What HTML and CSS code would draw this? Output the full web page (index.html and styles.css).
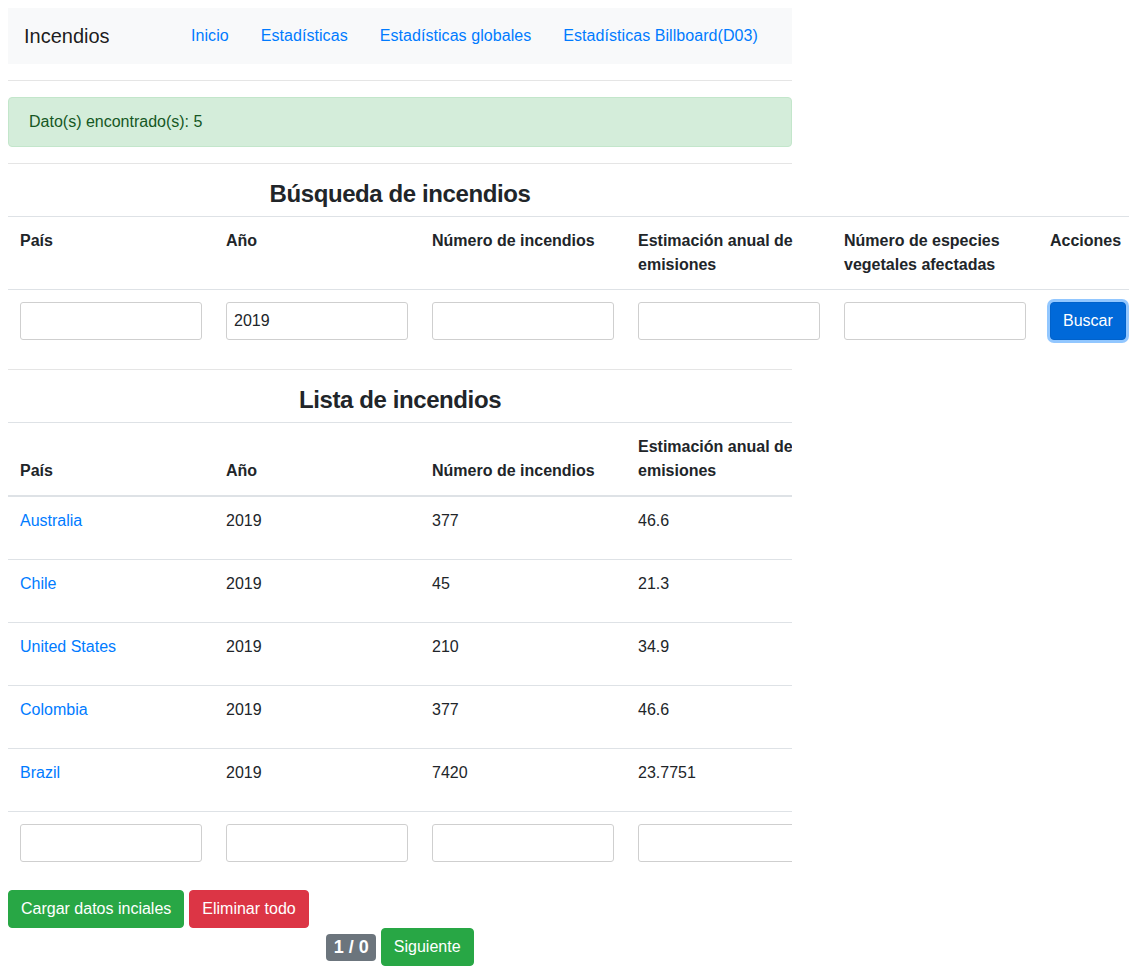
FILE: index.html
```html
<!DOCTYPE html>
<html lang="es">
<head>
<meta charset="utf-8">
<title>Incendios</title>
<link rel="stylesheet" href="styles.css">
</head>
<body>
<div class="main">
  <nav class="navbar">
    <a class="brand" href="#">Incendios</a>
    <ul class="nav-links">
      <li><a href="#">Inicio</a></li>
      <li><a href="#">Estadísticas</a></li>
      <li><a href="#">Estadísticas globales</a></li>
      <li><a href="#">Estadísticas Billboard(D03)</a></li>
    </ul>
  </nav>
  <hr class="sep">
  <div class="alert">Dato(s) encontrado(s): 5</div>
  <hr class="sep">
  <h4 class="title">Búsqueda de incendios</h4>
  <table class="tbl search">
    <colgroup><col><col><col><col><col><col></colgroup>
    <tbody>
      <tr class="head-row">
        <th>País</th>
        <th>Año</th>
        <th>Número de incendios</th>
        <th>Estimación anual de emisiones</th>
        <th>Número de especies vegetales afectadas</th>
        <th>Acciones</th>
      </tr>
      <tr>
        <td><input class="field" type="text"></td>
        <td><input class="field" type="text" value="2019"></td>
        <td><input class="field" type="text"></td>
        <td><input class="field" type="text"></td>
        <td><input class="field" type="text"></td>
        <td><button class="btn btn-primary focus">Buscar</button></td>
      </tr>
    </tbody>
  </table>
  <hr class="sep">
  <h4 class="title">Lista de incendios</h4>
  <div class="clip">
    <table class="tbl list">
      <colgroup><col><col><col><col></colgroup>
      <thead>
        <tr>
          <th>País</th>
          <th>Año</th>
          <th>Número de incendios</th>
          <th>Estimación anual de emisiones</th>
        </tr>
      </thead>
      <tbody>
        <tr><td><a href="#">Australia</a></td><td>2019</td><td>377</td><td>46.6</td></tr>
        <tr><td><a href="#">Chile</a></td><td>2019</td><td>45</td><td>21.3</td></tr>
        <tr><td><a href="#">United States</a></td><td>2019</td><td>210</td><td>34.9</td></tr>
        <tr><td><a href="#">Colombia</a></td><td>2019</td><td>377</td><td>46.6</td></tr>
        <tr><td><a href="#">Brazil</a></td><td>2019</td><td>7420</td><td>23.7751</td></tr>
        <tr>
          <td><input class="field" type="text"></td>
          <td><input class="field" type="text"></td>
          <td><input class="field" type="text"></td>
          <td><input class="field" type="text"></td>
        </tr>
      </tbody>
    </table>
  </div>
  <div class="actions">
    <button class="btn btn-success">Cargar datos inciales</button>
    <button class="btn btn-danger">Eliminar todo</button>
  </div>
  <div class="pager">
    <span class="badge">1 / 0</span>
    <button class="btn btn-success">Siguiente</button>
  </div>
</div>
</body>
</html>
```

FILE: styles.css
```css
html {
  overflow: hidden;
}
body {
  margin: 8px;
  font-family: "Liberation Sans", Arial, sans-serif;
  font-size: 16px;
  line-height: 1.5;
  color: #212529;
  background: #fff;
}
a {
  color: #007bff;
  text-decoration: none;
}
.main {
  width: 784px;
}
.navbar {
  display: flex;
  align-items: center;
  background: #f8f9fa;
  padding: 8px 16px;
}
.brand {
  display: block;
  flex-shrink: 0;
  width: 151px;
  font-size: 20px;
  line-height: 30px;
  padding: 5px 0;
  color: rgba(0, 0, 0, 0.9);
}
.nav-links {
  display: flex;
  flex-shrink: 0;
  list-style: none;
  margin: 0;
  padding: 0;
  white-space: nowrap;
}
.nav-links li {
  flex-shrink: 0;
}
.nav-links a {
  display: block;
  padding: 8px 16px;
  letter-spacing: 0.06px;
}
.sep {
  margin: 16px 0;
  border: 0;
  border-top: 1px solid rgba(0, 0, 0, 0.1);
  height: 0;
}
.alert {
  padding: 12px 20px;
  border: 1px solid #c3e6cb;
  border-radius: 4px;
  background: #d4edda;
  color: #155724;
  margin-bottom: 16px;
}
.title {
  margin: 0 0 8px;
  font-size: 24px;
  line-height: 28px;
  font-weight: 700;
  letter-spacing: -0.4px;
  text-align: center;
}
.tbl {
  border-collapse: collapse;
  table-layout: fixed;
  margin-bottom: 16px;
}
.search {
  width: 1236px;
  margin-bottom: 17px;
}
.list {
  width: 824px;
}
.tbl col {
  width: 206px;
}
.tbl th,
.tbl td {
  padding: 12px;
  border-top: 1px solid #dee2e6;
  text-align: left;
  vertical-align: top;
}
.list td {
  height: 38px;
}
.tbl th {
  font-weight: 700;
}
.list thead th {
  vertical-align: bottom;
  border-bottom: 2px solid #dee2e6;
}
.clip {
  width: 784px;
  overflow: hidden;
}
.field {
  display: block;
  box-sizing: border-box;
  width: 100%;
  height: 38px;
  margin: 0;
  padding: 0 7px;
  border: 1px solid #cfcfcf;
  border-radius: 3px;
  font-family: "Liberation Sans", Arial, sans-serif;
  font-size: 16px;
  color: #212529;
  background: #fff;
}
.btn {
  display: inline-block;
  box-sizing: border-box;
  height: 38px;
  padding: 0 12px;
  border: 1px solid transparent;
  border-radius: 4px;
  font-family: "Liberation Sans", Arial, sans-serif;
  font-size: 16px;
  line-height: 36px;
  color: #fff;
  cursor: pointer;
  vertical-align: middle;
}
.btn-primary {
  background: #007bff;
  border-color: #007bff;
}
.btn-primary.focus {
  background: #0069d9;
  border-color: #0062cc;
  box-shadow: 0 0 0 3px rgba(38, 143, 255, 0.5);
}
.btn-success {
  background: #28a745;
  border-color: #28a745;
}
.btn-danger {
  background: #dc3545;
  border-color: #dc3545;
}
.actions {
  display: flex;
  gap: 5px;
}
.pager {
  display: flex;
  justify-content: center;
  align-items: center;
  gap: 5px;
}
.badge {
  display: inline-block;
  padding: 4.5px 7.2px;
  font-size: 18px;
  font-weight: 700;
  line-height: 1;
  color: #fff;
  background: #6c757d;
  border-radius: 4px;
}
```
